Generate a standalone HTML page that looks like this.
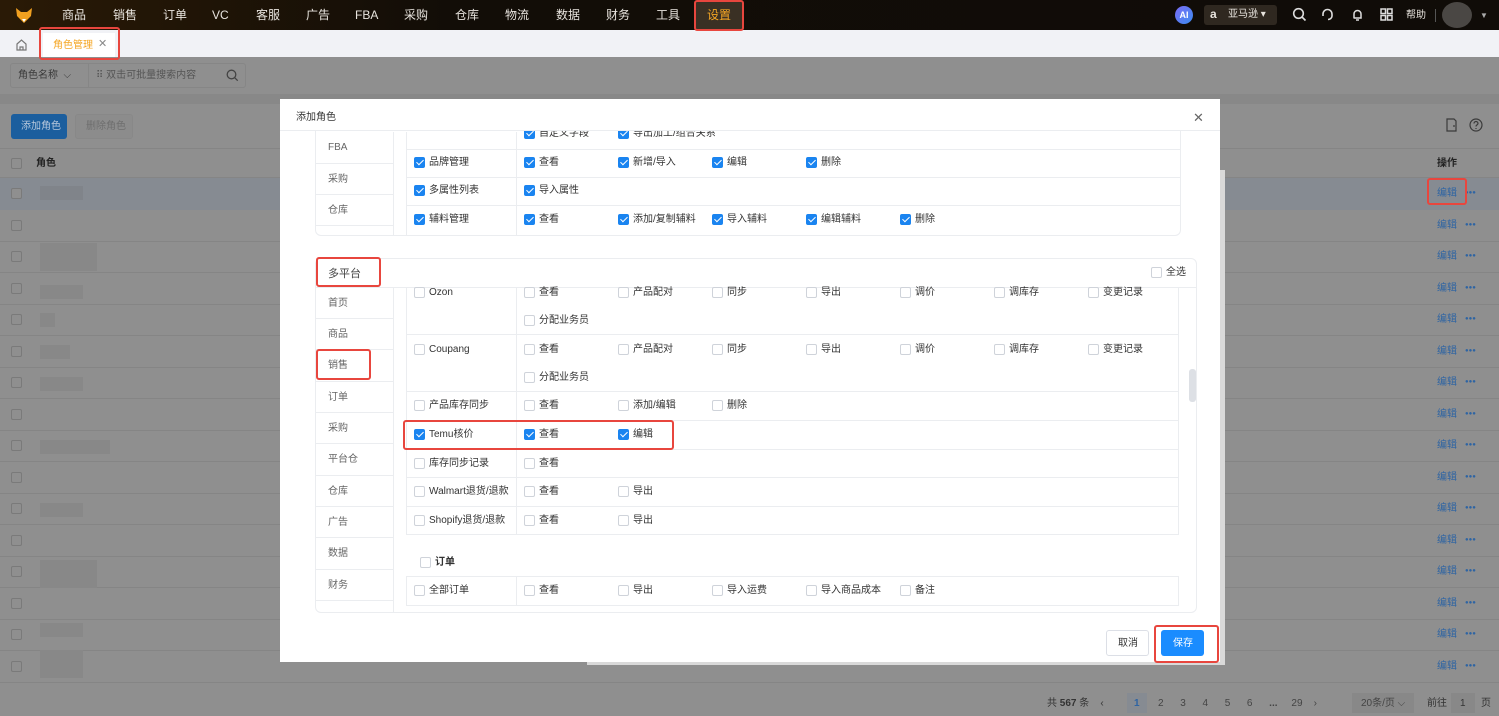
<!DOCTYPE html>
<html><head><meta charset="utf-8">
<style>
*{margin:0;padding:0;box-sizing:border-box}
body{width:1499px;height:716px;overflow:hidden;position:relative;background:#8f8f8f;font-family:"Liberation Sans","Noto Sans CJK SC",sans-serif;font-size:10px;color:#333;line-height:12px}
.a{position:absolute}
.nav{left:0;top:0;width:1499px;height:30px;background:linear-gradient(90deg,#2a1a06,#120d07 30%,#100c08)}
.nav span{position:absolute;top:8px;color:#e8e4de;font-size:12px;line-height:14px}
.red{position:absolute;border:2px solid #e8463e;border-radius:3px;z-index:5}
.cb{position:absolute;width:11px;height:11px;border:1px solid #cfd3da;border-radius:2px;background:#fff}
.ck{background:#1a84f0;border-color:#1a84f0}
.ck:after{content:"";position:absolute;left:3px;top:0px;width:3px;height:6px;border:solid #fff;border-width:0 1.5px 1.5px 0;transform:rotate(45deg)}
.t{position:absolute;font-size:10px;color:#333;white-space:nowrap;line-height:11px}
.hl{position:absolute;height:1px;background:#ebedf0}
.vl{position:absolute;width:1px;background:#ebedf0}
.side{position:absolute;font-size:10px;color:#666;line-height:11px}
.rowl{position:absolute;left:0;width:1499px;height:1px;background:#858585}
.ed{position:absolute;left:1437px;color:#2e64a3;font-size:10px;line-height:11px}
.dots{position:absolute;left:1465px;color:#2e64a3;font-size:6px;line-height:11px;letter-spacing:0}
.blur{position:absolute;background:#888}
</style></head><body>

<div class="a nav">
  <svg class="a" style="left:14px;top:5px" width="20" height="20" viewBox="0 0 20 20"><path d="M2 3 L7 7 L13 7 L18 3 L17 11 L10 18 L3 11 Z" fill="#f0a020"/><path d="M8 14 L10 17 L12 14Z" fill="#fff"/></svg>
  <span style="left:62px">商品</span><span style="left:113px">销售</span><span style="left:163px">订单</span><span style="left:212px">VC</span><span style="left:256px">客服</span><span style="left:306px">广告</span><span style="left:355px">FBA</span><span style="left:404px">采购</span><span style="left:455px">仓库</span><span style="left:505px">物流</span><span style="left:556px">数据</span><span style="left:606px">财务</span><span style="left:656px">工具</span>
  <div class="a" style="left:695px;top:1px;width:47px;height:28px;background:#3a3024"></div>
  <span style="left:707px;color:#f5a623">设置</span>
  <div class="a" style="left:1175px;top:6px;width:18px;height:18px;border-radius:50%;background:linear-gradient(135deg,#7b6cf6,#3b8cf0);color:#fff;font-size:9px;font-weight:bold;text-align:center;line-height:18px">AI</div>
  <div class="a" style="left:1204px;top:5px;width:73px;height:20px;border-radius:3px;background:#2f2820"></div>
  <span style="left:1210px;top:7px;font-weight:bold">a</span><span style="left:1228px;top:8px;font-size:10px">亚马逊 ▾</span>
  <svg class="a" style="left:1292px;top:7px" width="15" height="15" viewBox="0 0 15 15" fill="none" stroke="#ddd" stroke-width="1.6"><circle cx="6.5" cy="6.5" r="4.8"/><path d="M10 10l3.5 3.5"/></svg>
  <svg class="a" style="left:1320px;top:7px" width="15" height="15" viewBox="0 0 15 15" fill="none" stroke="#ddd" stroke-width="1.6"><path d="M3 9V7a4.5 4.5 0 019 0v2"/><path d="M12 9c0 2-2 3.5-4 3.5"/></svg>
  <svg class="a" style="left:1350px;top:7px" width="15" height="15" viewBox="0 0 15 15" fill="none" stroke="#ddd" stroke-width="1.5"><path d="M4 11V7a3.5 3.5 0 017 0v4H3.5h8"/><path d="M6 13h3"/></svg>
  <svg class="a" style="left:1379px;top:7px" width="15" height="15" viewBox="0 0 15 15" fill="none" stroke="#ddd" stroke-width="1.5"><rect x="2" y="2" width="4.5" height="4.5"/><rect x="8.5" y="2" width="4.5" height="4.5"/><rect x="2" y="8.5" width="4.5" height="4.5"/><rect x="8.5" y="8.5" width="4.5" height="4.5"/></svg>
  <span style="left:1406px;top:9px;font-size:10px">帮助</span>
  <div class="a" style="left:1435px;top:9px;width:1px;height:13px;background:#555"></div>
  <div class="a" style="left:1442px;top:2px;width:30px;height:26px;border-radius:50%;background:#4a4744"></div>
  <span style="left:1480px;top:9px;font-size:8px;color:#aaa">▼</span>
</div>

<div class="a" style="left:0;top:30px;width:1499px;height:27px;background:#f1f2f6"></div>
<svg class="a" style="left:15px;top:38px" width="13" height="13" viewBox="0 0 13 13" fill="none" stroke="#777" stroke-width="1.2"><path d="M2 6L6.5 2 11 6v6H2z"/><path d="M5 12V9h3v3"/></svg>
<div class="a" style="left:43px;top:33px;width:72px;height:24px;background:#fff"></div>
<div class="t" style="left:53px;top:40px;color:#f5a623">角色管理</div>
<div class="t" style="left:98px;top:39px;color:#888;font-size:11px">✕</div>
<div class="red" style="left:39px;top:27px;width:81px;height:33px"></div>

<div class="a" style="left:0;top:94px;width:1499px;height:10px;background:#888"></div>
<div class="a" style="left:10px;top:63px;width:236px;height:25px;border:1px solid #868686;border-radius:3px;background:#8f8f8f"></div>
<div class="t" style="left:18px;top:70px;color:#3a3a3a">角色名称 &nbsp;⌵</div>
<div class="a" style="left:88px;top:63px;width:1px;height:25px;background:#868686"></div>
<div class="t" style="left:96px;top:70px;color:#555">⠿ 双击可批量搜索内容</div>
<svg class="a" style="left:226px;top:69px" width="13" height="13" viewBox="0 0 13 13" fill="none" stroke="#444" stroke-width="1.3"><circle cx="5.5" cy="5.5" r="4.3"/><path d="M8.7 8.7l3 3"/></svg>
<div class="a" style="left:11px;top:114px;width:56px;height:25px;background:#1b5e9e;border-radius:3px"></div>
<div class="t" style="left:21px;top:121px;color:#b8c8dc">添加角色</div>
<div class="a" style="left:75px;top:114px;width:58px;height:25px;border:1px solid #888;border-radius:3px;background:#8c8c8c"></div>
<div class="t" style="left:86px;top:121px;color:#6e6e6e">删除角色</div>
<svg class="a" style="left:1445px;top:118px" width="13" height="14" viewBox="0 0 13 14" fill="none" stroke="#3a3a3a" stroke-width="1.2"><path d="M2 1h7l2 2v10H2z"/><path d="M8 8h2"/></svg>
<svg class="a" style="left:1469px;top:118px" width="14" height="14" viewBox="0 0 14 14" fill="none" stroke="#3a3a3a" stroke-width="1.2"><circle cx="7" cy="7" r="6"/><path d="M5 5.5a2 2 0 114 0c0 1.2-2 1.3-2 3"/><path d="M7 10v1"/></svg>
<div class="a" style="left:0;top:178px;width:1499px;height:32px;background:#868b92"></div>
<div class="t" style="left:36px;top:158px;color:#222;font-weight:bold">角色</div>
<div class="t" style="left:1437px;top:158px;color:#222;font-weight:bold">操作</div>
<div class="cb" style="left:11px;top:158px;background:#8f8f8f;border-color:#7a7a7a"></div>
<div class="rowl" style="top:148px"></div><div class="rowl" style="top:177px"></div>
<div class="rowl" style="top:241px"></div><div class="rowl" style="top:272px"></div><div class="rowl" style="top:304px"></div><div class="rowl" style="top:335px"></div><div class="rowl" style="top:367px"></div><div class="rowl" style="top:398px"></div><div class="rowl" style="top:430px"></div><div class="rowl" style="top:461px"></div><div class="rowl" style="top:493px"></div><div class="rowl" style="top:524px"></div><div class="rowl" style="top:556px"></div><div class="rowl" style="top:587px"></div><div class="rowl" style="top:619px"></div><div class="rowl" style="top:650px"></div><div class="rowl" style="top:682px"></div>
<div class="cb" style="left:11px;top:188px;background:#8f8f8f;border-color:#7a7a7a"></div>
<div class="cb" style="left:11px;top:220px;background:#8f8f8f;border-color:#7a7a7a"></div>
<div class="cb" style="left:11px;top:251px;background:#8f8f8f;border-color:#7a7a7a"></div>
<div class="cb" style="left:11px;top:283px;background:#8f8f8f;border-color:#7a7a7a"></div>
<div class="cb" style="left:11px;top:314px;background:#8f8f8f;border-color:#7a7a7a"></div>
<div class="cb" style="left:11px;top:346px;background:#8f8f8f;border-color:#7a7a7a"></div>
<div class="cb" style="left:11px;top:377px;background:#8f8f8f;border-color:#7a7a7a"></div>
<div class="cb" style="left:11px;top:409px;background:#8f8f8f;border-color:#7a7a7a"></div>
<div class="cb" style="left:11px;top:440px;background:#8f8f8f;border-color:#7a7a7a"></div>
<div class="cb" style="left:11px;top:472px;background:#8f8f8f;border-color:#7a7a7a"></div>
<div class="cb" style="left:11px;top:503px;background:#8f8f8f;border-color:#7a7a7a"></div>
<div class="cb" style="left:11px;top:535px;background:#8f8f8f;border-color:#7a7a7a"></div>
<div class="cb" style="left:11px;top:566px;background:#8f8f8f;border-color:#7a7a7a"></div>
<div class="cb" style="left:11px;top:598px;background:#8f8f8f;border-color:#7a7a7a"></div>
<div class="cb" style="left:11px;top:629px;background:#8f8f8f;border-color:#7a7a7a"></div>
<div class="cb" style="left:11px;top:661px;background:#8f8f8f;border-color:#7a7a7a"></div>
<div class="blur" style="left:40px;top:186px;width:43px;height:14px;background:#80848a"></div>
<div class="blur" style="left:40px;top:243px;width:57px;height:28px"></div>
<div class="blur" style="left:40px;top:285px;width:43px;height:14px"></div>
<div class="blur" style="left:40px;top:313px;width:15px;height:14px"></div>
<div class="blur" style="left:40px;top:345px;width:30px;height:14px"></div>
<div class="blur" style="left:40px;top:377px;width:43px;height:14px"></div>
<div class="blur" style="left:40px;top:440px;width:70px;height:14px"></div>
<div class="blur" style="left:40px;top:503px;width:43px;height:14px"></div>
<div class="blur" style="left:40px;top:560px;width:57px;height:28px"></div>
<div class="blur" style="left:40px;top:623px;width:43px;height:14px"></div>
<div class="blur" style="left:40px;top:650px;width:43px;height:28px"></div>
<div class="ed" style="top:188px">编辑</div><div class="dots" style="top:188px">●●●</div>
<div class="ed" style="top:251px">编辑</div><div class="dots" style="top:251px">●●●</div>
<div class="ed" style="top:283px">编辑</div><div class="dots" style="top:283px">●●●</div>
<div class="ed" style="top:314px">编辑</div><div class="dots" style="top:314px">●●●</div>
<div class="ed" style="top:346px">编辑</div><div class="dots" style="top:346px">●●●</div>
<div class="ed" style="top:377px">编辑</div><div class="dots" style="top:377px">●●●</div>
<div class="ed" style="top:409px">编辑</div><div class="dots" style="top:409px">●●●</div>
<div class="ed" style="top:440px">编辑</div><div class="dots" style="top:440px">●●●</div>
<div class="ed" style="top:472px">编辑</div><div class="dots" style="top:472px">●●●</div>
<div class="ed" style="top:503px">编辑</div><div class="dots" style="top:503px">●●●</div>
<div class="ed" style="top:535px">编辑</div><div class="dots" style="top:535px">●●●</div>
<div class="ed" style="top:566px">编辑</div><div class="dots" style="top:566px">●●●</div>
<div class="ed" style="top:598px">编辑</div><div class="dots" style="top:598px">●●●</div>
<div class="ed" style="top:629px">编辑</div><div class="dots" style="top:629px">●●●</div>
<div class="ed" style="top:661px">编辑</div><div class="dots" style="top:661px">●●●</div>
<div class="ed" style="top:220px">编辑</div><div class="dots" style="top:220px">●●●</div>
<div class="red" style="left:1427px;top:178px;width:40px;height:27px"></div>

<div class="t" style="left:1047px;top:698px;color:#333">共 <b>567</b> 条 &nbsp; &nbsp;‹</div>
<div class="a" style="left:1127px;top:693px;width:20px;height:20px;background:#868b92"></div>
<div class="t" style="left:1134px;top:698px;color:#2e64a3;font-weight:bold">1</div>
<div class="t" style="left:1158px;top:698px;color:#444">2 &nbsp; &nbsp; &nbsp;3 &nbsp; &nbsp; &nbsp;4 &nbsp; &nbsp; &nbsp;5 &nbsp; &nbsp; &nbsp;6 &nbsp; &nbsp; &nbsp;<b>...</b> &nbsp; &nbsp; 29 &nbsp; &nbsp;›</div>
<div class="a" style="left:1352px;top:693px;width:62px;height:20px;background:#888"></div>
<div class="t" style="left:1361px;top:698px;color:#444">20条/页 ⌵</div>
<div class="t" style="left:1427px;top:698px;color:#333">前往</div>
<div class="a" style="left:1451px;top:693px;width:24px;height:20px;background:#888"></div>
<div class="t" style="left:1460px;top:698px;color:#333">1</div>
<div class="t" style="left:1481px;top:698px;color:#333">页</div>

<div class="a" style="left:587px;top:170px;width:638px;height:495px;background:#d9d9d9"></div>
<div class="a" style="left:1212px;top:340px;width:6px;height:300px;background:#c8c8c8;border-radius:3px"></div>

<div class="a" style="left:280px;top:99px;width:940px;height:563px;background:#fff;overflow:hidden">
  <!-- section 1 -->
  <div class="a" style="left:35px;top:20px;width:866px;height:117px;border:1px solid #ebedf0;border-radius:6px"></div>
  <div class="vl" style="left:113px;top:33px;height:104px"></div>
  <div class="vl" style="left:126px;top:33px;height:104px"></div>
  <div class="vl" style="left:236px;top:33px;height:104px"></div>
  <div class="hl" style="left:35px;top:64px;width:78px"></div><div class="hl" style="left:35px;top:95px;width:78px"></div><div class="hl" style="left:35px;top:126px;width:78px"></div>
  <div class="hl" style="left:126px;top:50px;width:775px"></div><div class="hl" style="left:126px;top:78px;width:775px"></div><div class="hl" style="left:126px;top:106px;width:775px"></div>
  <div class="side" style="left:48px;top:43px">FBA</div><div class="side" style="left:48px;top:75px">采购</div><div class="side" style="left:48px;top:106px">仓库</div>
  <div class="cb ck" style="left:244px;top:29px"></div><div class="t" style="left:259px;top:29px">自定义字段</div>
  <div class="cb ck" style="left:338px;top:29px"></div><div class="t" style="left:353px;top:29px">导出加工/组合关系</div>
  <div class="cb ck" style="left:134px;top:58px"></div><div class="t" style="left:149px;top:58px">品牌管理</div>
  <div class="cb ck" style="left:244px;top:58px"></div><div class="t" style="left:259px;top:58px">查看</div>
  <div class="cb ck" style="left:338px;top:58px"></div><div class="t" style="left:353px;top:58px">新增/导入</div>
  <div class="cb ck" style="left:432px;top:58px"></div><div class="t" style="left:447px;top:58px">编辑</div>
  <div class="cb ck" style="left:526px;top:58px"></div><div class="t" style="left:541px;top:58px">删除</div>
  <div class="cb ck" style="left:134px;top:86px"></div><div class="t" style="left:149px;top:86px">多属性列表</div>
  <div class="cb ck" style="left:244px;top:86px"></div><div class="t" style="left:259px;top:86px">导入属性</div>
  <div class="cb ck" style="left:134px;top:115px"></div><div class="t" style="left:149px;top:115px">辅料管理</div>
  <div class="cb ck" style="left:244px;top:115px"></div><div class="t" style="left:259px;top:115px">查看</div>
  <div class="cb ck" style="left:338px;top:115px"></div><div class="t" style="left:353px;top:115px">添加/复制辅料</div>
  <div class="cb ck" style="left:432px;top:115px"></div><div class="t" style="left:447px;top:115px">导入辅料</div>
  <div class="cb ck" style="left:526px;top:115px"></div><div class="t" style="left:541px;top:115px">编辑辅料</div>
  <div class="cb ck" style="left:620px;top:115px"></div><div class="t" style="left:635px;top:115px">删除</div>

  <!-- header on top -->
  <div class="a" style="left:0;top:0;width:940px;height:32px;background:#fff;border-bottom:1px solid #ebedf0"></div>
  <div class="t" style="left:16px;top:13px">添加角色</div>
  <div class="t" style="left:913px;top:12px;font-size:13px;line-height:13px;color:#666">✕</div>

  <!-- section 2 -->
  <div class="a" style="left:35px;top:159px;width:882px;height:355px;border:1px solid #ebedf0;border-radius:6px"></div>
  <div class="hl" style="left:35px;top:188px;width:882px"></div>
  <div class="t" style="left:48px;top:169px;font-size:11px;line-height:12px;color:#444">多平台</div>
  <div class="cb" style="left:871px;top:168px"></div><div class="t" style="left:886px;top:168px">全选</div>
  <div class="a" style="left:909px;top:270px;width:7px;height:33px;background:#dde0e5;border-radius:3px"></div>
  <div class="vl" style="left:113px;top:188px;height:326px"></div>
  <div class="a" style="left:126px;top:188px;width:773px;height:248px;border:1px solid #ebedf0;border-top:none"></div>
  <div class="vl" style="left:236px;top:188px;height:248px"></div>
  <div class="hl" style="left:126px;top:235px;width:773px"></div><div class="hl" style="left:126px;top:292px;width:773px"></div><div class="hl" style="left:126px;top:321px;width:773px"></div><div class="hl" style="left:126px;top:350px;width:773px"></div><div class="hl" style="left:126px;top:378px;width:773px"></div><div class="hl" style="left:126px;top:407px;width:773px"></div>
  <div class="hl" style="left:35px;top:219px;width:78px"></div><div class="hl" style="left:35px;top:250px;width:78px"></div><div class="hl" style="left:35px;top:282px;width:78px"></div><div class="hl" style="left:35px;top:313px;width:78px"></div><div class="hl" style="left:35px;top:344px;width:78px"></div><div class="hl" style="left:35px;top:376px;width:78px"></div><div class="hl" style="left:35px;top:407px;width:78px"></div><div class="hl" style="left:35px;top:438px;width:78px"></div><div class="hl" style="left:35px;top:470px;width:78px"></div><div class="hl" style="left:35px;top:501px;width:78px"></div>
  <div class="side" style="left:48px;top:199px">首页</div><div class="side" style="left:48px;top:230px">商品</div><div class="side" style="left:48px;top:261px">销售</div><div class="side" style="left:48px;top:293px">订单</div><div class="side" style="left:48px;top:324px">采购</div><div class="side" style="left:48px;top:355px">平台仓</div><div class="side" style="left:48px;top:387px">仓库</div><div class="side" style="left:48px;top:418px">广告</div><div class="side" style="left:48px;top:449px">数据</div><div class="side" style="left:48px;top:481px">财务</div>

  <div class="cb" style="left:134px;top:188px"></div><div class="t" style="left:149px;top:188px">Ozon</div>
  <div class="cb" style="left:244px;top:188px"></div><div class="t" style="left:259px;top:188px">查看</div>
  <div class="cb" style="left:338px;top:188px"></div><div class="t" style="left:353px;top:188px">产品配对</div>
  <div class="cb" style="left:432px;top:188px"></div><div class="t" style="left:447px;top:188px">同步</div>
  <div class="cb" style="left:526px;top:188px"></div><div class="t" style="left:541px;top:188px">导出</div>
  <div class="cb" style="left:620px;top:188px"></div><div class="t" style="left:635px;top:188px">调价</div>
  <div class="cb" style="left:714px;top:188px"></div><div class="t" style="left:729px;top:188px">调库存</div>
  <div class="cb" style="left:808px;top:188px"></div><div class="t" style="left:823px;top:188px">变更记录</div>
  <div class="cb" style="left:244px;top:216px"></div><div class="t" style="left:259px;top:216px">分配业务员</div>
  <div class="cb" style="left:134px;top:245px"></div><div class="t" style="left:149px;top:245px">Coupang</div>
  <div class="cb" style="left:244px;top:245px"></div><div class="t" style="left:259px;top:245px">查看</div>
  <div class="cb" style="left:338px;top:245px"></div><div class="t" style="left:353px;top:245px">产品配对</div>
  <div class="cb" style="left:432px;top:245px"></div><div class="t" style="left:447px;top:245px">同步</div>
  <div class="cb" style="left:526px;top:245px"></div><div class="t" style="left:541px;top:245px">导出</div>
  <div class="cb" style="left:620px;top:245px"></div><div class="t" style="left:635px;top:245px">调价</div>
  <div class="cb" style="left:714px;top:245px"></div><div class="t" style="left:729px;top:245px">调库存</div>
  <div class="cb" style="left:808px;top:245px"></div><div class="t" style="left:823px;top:245px">变更记录</div>
  <div class="cb" style="left:244px;top:273px"></div><div class="t" style="left:259px;top:273px">分配业务员</div>
  <div class="cb" style="left:134px;top:301px"></div><div class="t" style="left:149px;top:301px">产品库存同步</div>
  <div class="cb" style="left:244px;top:301px"></div><div class="t" style="left:259px;top:301px">查看</div>
  <div class="cb" style="left:338px;top:301px"></div><div class="t" style="left:353px;top:301px">添加/编辑</div>
  <div class="cb" style="left:432px;top:301px"></div><div class="t" style="left:447px;top:301px">删除</div>
  <div class="cb ck" style="left:134px;top:330px"></div><div class="t" style="left:149px;top:330px">Temu核价</div>
  <div class="cb ck" style="left:244px;top:330px"></div><div class="t" style="left:259px;top:330px">查看</div>
  <div class="cb ck" style="left:338px;top:330px"></div><div class="t" style="left:353px;top:330px">编辑</div>
  <div class="cb" style="left:134px;top:359px"></div><div class="t" style="left:149px;top:359px">库存同步记录</div>
  <div class="cb" style="left:244px;top:359px"></div><div class="t" style="left:259px;top:359px">查看</div>
  <div class="cb" style="left:134px;top:387px"></div><div class="t" style="left:149px;top:387px">Walmart退货/退款</div>
  <div class="cb" style="left:244px;top:387px"></div><div class="t" style="left:259px;top:387px">查看</div>
  <div class="cb" style="left:338px;top:387px"></div><div class="t" style="left:353px;top:387px">导出</div>
  <div class="cb" style="left:134px;top:416px"></div><div class="t" style="left:149px;top:416px">Shopify退货/退款</div>
  <div class="cb" style="left:244px;top:416px"></div><div class="t" style="left:259px;top:416px">查看</div>
  <div class="cb" style="left:338px;top:416px"></div><div class="t" style="left:353px;top:416px">导出</div>
  <div class="cb" style="left:140px;top:458px"></div><div class="t" style="left:155px;top:458px;font-weight:bold">订单</div>
  <div class="a" style="left:126px;top:477px;width:773px;height:30px;border:1px solid #ebedf0"></div>
  <div class="vl" style="left:236px;top:477px;height:30px"></div>
  <div class="cb" style="left:134px;top:486px"></div><div class="t" style="left:149px;top:486px">全部订单</div>
  <div class="cb" style="left:244px;top:486px"></div><div class="t" style="left:259px;top:486px">查看</div>
  <div class="cb" style="left:338px;top:486px"></div><div class="t" style="left:353px;top:486px">导出</div>
  <div class="cb" style="left:432px;top:486px"></div><div class="t" style="left:447px;top:486px">导入运费</div>
  <div class="cb" style="left:526px;top:486px"></div><div class="t" style="left:541px;top:486px">导入商品成本</div>
  <div class="cb" style="left:620px;top:486px"></div><div class="t" style="left:635px;top:486px">备注</div>

  <div class="a" style="left:826px;top:531px;width:43px;height:26px;border:1px solid #dcdfe6;border-radius:3px"></div>
  <div class="t" style="left:838px;top:539px">取消</div>
  <div class="a" style="left:881px;top:531px;width:43px;height:26px;background:#1a8cff;border-radius:3px"></div>
  <div class="t" style="left:893px;top:539px;color:#fff">保存</div>
</div>

<div class="red" style="left:316px;top:257px;width:65px;height:30px"></div>
<div class="red" style="left:316px;top:349px;width:55px;height:31px"></div>
<div class="red" style="left:403px;top:420px;width:271px;height:30px"></div>
<div class="red" style="left:1154px;top:625px;width:65px;height:38px"></div>
<div class="red" style="left:694px;top:0px;width:50px;height:31px"></div>
</body></html>
